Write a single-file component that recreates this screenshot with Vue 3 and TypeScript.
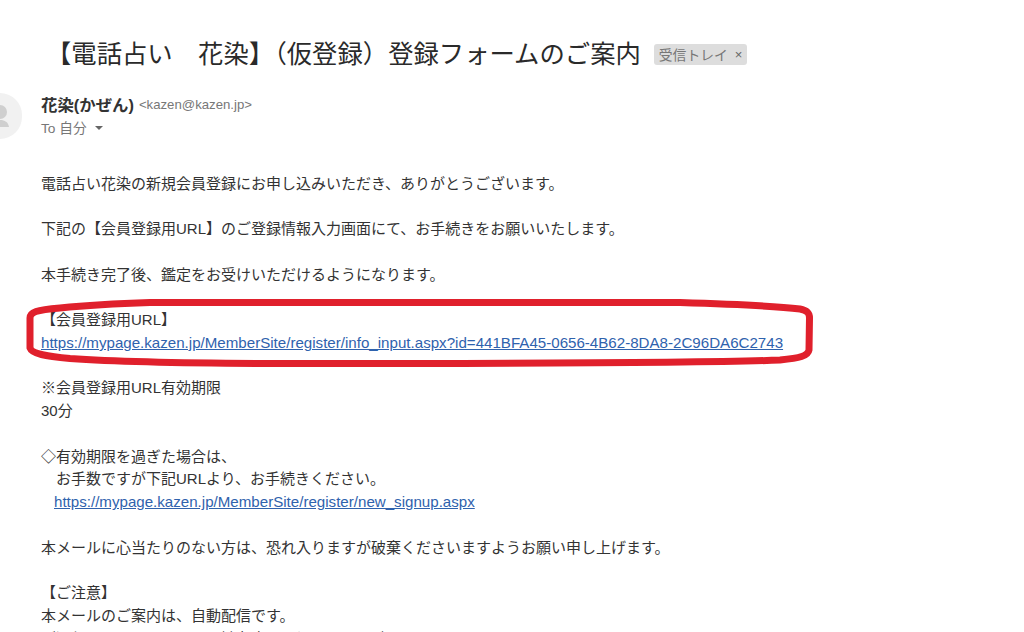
<script setup lang="ts">
const blocks: { lines: { text: string; link?: boolean; indent?: number }[] }[] = [
  { lines: [{ text: '電話占い花染の新規会員登録にお申し込みいただき、ありがとうございます。' }] },
  { lines: [{ text: '下記の【会員登録用URL】のご登録情報入力画面にて、お手続きをお願いいたします。' }] },
  { lines: [{ text: '本手続き完了後、鑑定をお受けいただけるようになります。' }] },
  { lines: [
    { text: '【会員登録用URL】' },
    { text: 'https://mypage.kazen.jp/MemberSite/register/info_input.aspx?id=441BFA45-0656-4B62-8DA8-2C96DA6C2743', link: true }
  ] },
  { lines: [{ text: '※会員登録用URL有効期限' }, { text: '30分' }] },
  { lines: [
    { text: '◇有効期限を過ぎた場合は、' },
    { text: '　お手数ですが下記URLより、お手続きください。' },
    { text: 'https://mypage.kazen.jp/MemberSite/register/new_signup.aspx', link: true, indent: 13 }
  ] },
  { lines: [{ text: '本メールに心当たりのない方は、恐れ入りますが破棄くださいますようお願い申し上げます。' }] },
  { lines: [
    { text: '【ご注意】' },
    { text: '本メールのご案内は、自動配信です。' },
    { text: 'ご返信いただきましても、対応致しかねますのでご了承下さい。' }
  ] }
]
</script>

<template>
  <div class="page">
    <div class="subject">
      <h1 class="title">【電話占い　花染】（仮登録）登録フォームのご案内</h1>
      <span class="label">受信トレイ<span class="label-x">×</span></span>
    </div>
    <div class="sender">
      <div class="avatar">
        <svg width="24" height="46" viewBox="0 0 24 46">
          <circle cx="0" cy="19" r="7" fill="#cfcfcf" />
          <path d="M-13 34c0-5 8-7 13-7s8 2 9 7z" fill="#cfcfcf" />
        </svg>
      </div>
      <div class="meta">
        <div class="from"><strong class="name">花染(かぜん)</strong><span class="addr">&lt;kazen@kazen.jp&gt;</span></div>
        <div class="to">To 自分<span class="caret"></span></div>
      </div>
    </div>
    <div class="body">
      <div v-for="(block, i) in blocks" :key="i" class="block">
        <div
          v-for="(line, j) in block.lines"
          :key="j"
          class="line"
          :style="line.indent ? { paddingLeft: line.indent + 'px' } : undefined"
        >
          <a v-if="line.link" class="link" href="#">{{ line.text }}</a>
          <template v-else>{{ line.text }}</template>
        </div>
      </div>
    </div>
    <svg class="ring" width="1024" height="632" viewBox="0 0 1024 632" fill="none">
      <path
        d="M150 302.500C300 302 500 302.500 680 302.500C730 304 775 306 800 309C808 310.500 809.500 314 809.500 318L809 350C808 356 800 358 780 360C700 363.500 500 363.500 300 363.500C200 363.500 120 362 70 358.500C45 356 32 354 30 348L30 318C30 312 36 310 60 308C90 305 120 303.500 150 302.500Z"
        stroke="#e0202c"
        stroke-width="7"
        stroke-linejoin="round"
      />
    </svg>
  </div>
</template>

<style>
html, body { margin: 0; background: #fff; }
</style>

<style scoped>
.page {
  position: relative;
  width: 1024px;
  height: 632px;
  overflow: hidden;
  background: #fff;
  color: #333;
  font-family: "Liberation Sans", "Noto Sans CJK JP", sans-serif;
}
.subject {
  display: flex;
  align-items: center;
  gap: 13px;
  padding: 37px 0 0 46px;
  height: 35px;
}
.title {
  margin: 0;
  font-size: 25.350px;
  font-weight: 400;
  line-height: 35px;
  color: #2a2a2a;
  white-space: nowrap;
}
.label {
  display: inline-flex;
  align-items: center;
  height: 21px;
  padding: 0 5px;
  margin-top: -1px;
  background: #dddddd;
  border-radius: 3px;
  font-size: 13.800px;
  color: #777;
  white-space: nowrap;
}
.label-x {
  margin-left: 7px;
  font-size: 13px;
  color: #666;
}
.sender {
  display: flex;
  gap: 19px;
  margin-top: 22px;
}
.avatar {
  width: 22px;
  height: 46px;
  margin-top: -1px;
  border-radius: 0 23px 23px 0;
  background: #f1f1f1;
  overflow: hidden;
}
.avatar svg { display: block; overflow: visible; }
.from {
  display: flex;
  align-items: center;
  gap: 5px;
  height: 20px;
}
.name {
  font-size: 16.400px;
  font-weight: 700;
  color: #333;
}
.addr {
  font-size: 13.200px;
  color: #777;
}
.to {
  display: flex;
  align-items: center;
  height: 22px;
  margin-top: 2px;
  font-size: 13.700px;
  color: #777;
}
.caret {
  width: 0;
  height: 0;
  margin-left: 8px;
  margin-top: 2px;
  border-left: 4.500px solid transparent;
  border-right: 4.500px solid transparent;
  border-top: 4.500px solid #666;
}
.body {
  margin: 34px 0 0 41px;
  font-size: 15px;
  line-height: 22.800px;
  color: #333;
  white-space: nowrap;
}
.block { margin-bottom: 22.600px; }
.link { color: #2f62ad; text-decoration: underline; font-size: 15.120px; }
.ring {
  position: absolute;
  inset: 0;
  pointer-events: none;
}
</style>
